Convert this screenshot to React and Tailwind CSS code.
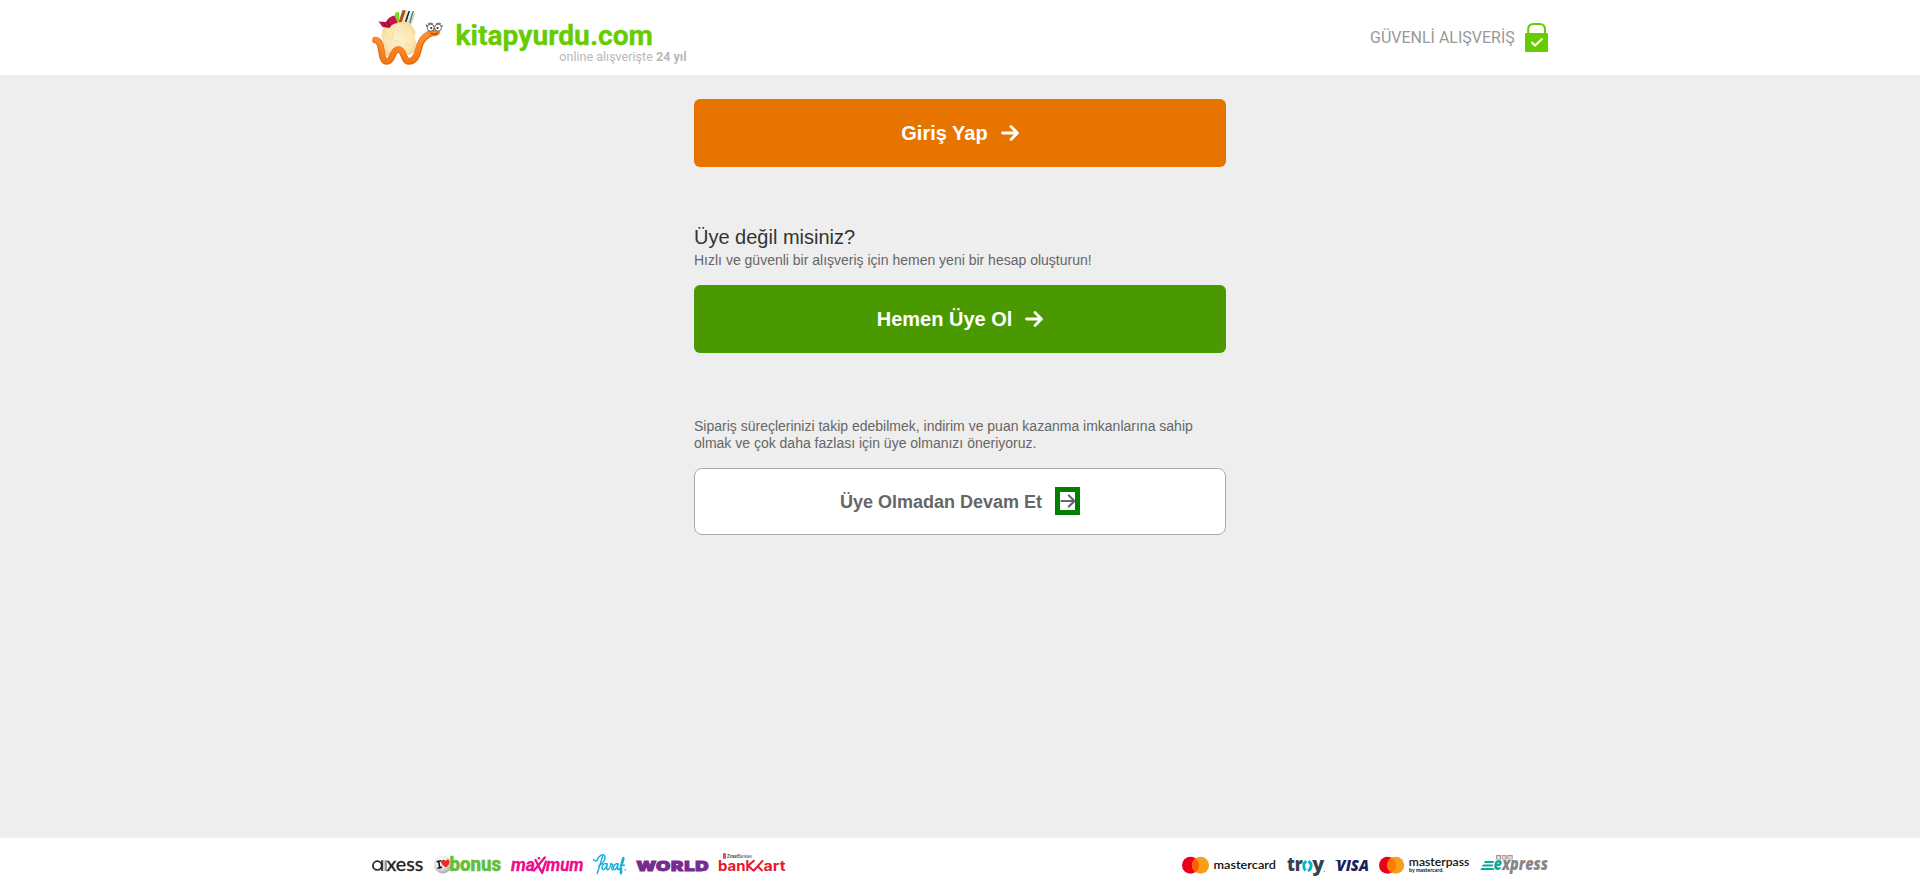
import React from "react";

const FIT = "spacingAndGlyphs";

function ArrowRight({ className }) {
  return (
    <svg className={className} viewBox="0 0 18 16" fill="none" stroke="currentColor" strokeLinecap="round" strokeLinejoin="round">
      <path d="M1.5 8H16M10 1.6L16.4 8L10 14.4" />
    </svg>
  );
}

function Mascot() {
  return (
    <svg className="h-[57px] w-[72px] shrink-0" viewBox="371 9 72 57">
      <defs>
        <linearGradient id="worm" x1="0" y1="0" x2="0" y2="1">
          <stop offset="0" stopColor="#f9933a" />
          <stop offset="1" stopColor="#f37a17" />
        </linearGradient>
        <radialGradient id="sack" cx="0.5" cy="0.5" r="0.6">
          <stop offset="0" stopColor="#fdf0cb" />
          <stop offset="0.65" stopColor="#fbe6b3" />
          <stop offset="1" stopColor="#f3cf8e" />
        </radialGradient>
      </defs>
      <path d="M393.500 22L395.500 12.500L399 12L399.500 24Z" fill="#7ed321" />
      <path d="M398 24L402.500 10L406 10.500L401.500 24Z" fill="#a85a26" />
      <path d="M401.500 24L406 10.500L408.500 11L404 24Z" fill="#f5e6c8" />
      <path d="M404 24L408.500 11L410 11L406 24Z" fill="#2b1a14" />
      <path d="M406 24L410.500 11.500L412.500 12L408.500 24Z" fill="#d8efee" />
      <path d="M408.500 24L412.500 11L414 11.300L410.500 24Z" fill="#3a8f96" />
      <path d="M410.500 24L414 12L415.500 13L412 24Z" fill="#ead9b8" />
      <path
        d="M384 28C388 24 393 25 397 22C402 23 408 20 411 24C412 28 416 29 415.500 34C413 38 418 42 416.500 47C416 51 413 54 409 55L398 51L388 56C384 55 381 50 382.500 45C385 41 380 38 382 33C382 30 383 29 384 28Z"
        fill="url(#sack)"
      />
      <path d="M391 29q3 6 1 10M407 28q-2 4-1 7M400 42l-6-2M406 42l3 4M388 37l3 3" stroke="#efd294" strokeWidth="0.700" fill="none" />
      <path d="M378.500 21.500L386 22C388 18 391 16 394.500 15.500L397.500 23C394 23.500 391 25 389.500 28L382.500 27Z" fill="#c4124a" />
      <path d="M387 21L389.500 27M383 22L386 27" stroke="#7b0a2c" strokeWidth="1" />
      <path
        d="M375.500 40C380 40.500 380.500 46 381.500 51C382.500 58 383.500 61.500 387 61.500C393 61.500 392 49.500 398.500 49.500C404.500 49.500 403 61.800 409.500 61.500C417 61 418 51 420 44.500C422.500 37.500 427 34 434 32.500"
        fill="none"
        stroke="#e56a0c"
        strokeWidth="6.600"
        strokeLinecap="round"
      />
      <path
        d="M375.500 39.500C380 40 381 46 382 51C383 57.500 383.500 60.800 387 60.800C392.500 60.800 392 49 398.500 49C404.500 49 403.500 61.300 409.500 60.800C416.500 60.300 417.500 50.500 419.500 44C422 37 426.500 33.500 434 32"
        fill="none"
        stroke="url(#worm)"
        strokeWidth="5"
        strokeLinecap="round"
      />
      <ellipse cx="434" cy="32" rx="6.200" ry="4.300" fill="#f58427" />
      <circle cx="430.700" cy="27.700" r="3.500" fill="#fff" stroke="#555" strokeWidth="0.900" />
      <circle cx="438" cy="27.700" r="3.500" fill="#fff" stroke="#555" strokeWidth="0.900" />
      <circle cx="431.200" cy="28" r="1.100" fill="#16324a" />
      <circle cx="437.500" cy="28" r="1.100" fill="#16324a" />
      <path d="M427 27l-1-2.500M441.500 27l1-2M428 24q2.500-2 5 0M436 24q2.500-2 5 0" fill="none" stroke="#444" strokeWidth="0.900" />
      <path d="M431 33.500q3.500 2 7-0.500" fill="none" stroke="#6b2b05" strokeWidth="0.900" />
    </svg>
  );
}

function Wordmark() {
  return (
    <svg className="ml-[12px] h-[57px] w-[234px] shrink-0 font-[Roboto,sans-serif]" viewBox="455 9 234 57">
      <text x="455.500" y="44.700" fontSize="28" fontWeight="700" fill="#66cc00" stroke="#66cc00" strokeWidth="0.300" textLength="197.500" lengthAdjust={FIT}>
        kitapyurdu.com
      </text>
      <text x="559.300" y="61.300" fontSize="12.500" fill="#b8b8b8" textLength="93.500" lengthAdjust={FIT}>
        online alışverişte
      </text>
      <text x="656" y="61.300" fontSize="12.500" fontWeight="700" fill="#b8b8b8" textLength="30.500" lengthAdjust={FIT}>
        24 yıl
      </text>
    </svg>
  );
}

function SecureBadge() {
  return (
    <svg className="h-[37px] w-[180px] font-[Roboto,sans-serif]" viewBox="1368 19 180 37">
      <text x="1370" y="43.300" fontSize="16" fill="#999" textLength="144.800" lengthAdjust={FIT}>
        GÜVENLİ ALIŞVERİŞ
      </text>
      <path d="M1528.200 35V29.500Q1528.200 24 1533.500 24H1539.500Q1545 24 1545 29.500V35" fill="none" stroke="#66cc00" strokeWidth="2" />
      <rect x="1525" y="33" width="23" height="19" rx="1" fill="#66cc00" />
      <path d="M1531.500 42L1535 45.500L1542.500 38.500" fill="none" stroke="#fff" strokeWidth="2" />
    </svg>
  );
}

function BankLogos() {
  return (
    <div className="flex items-center">
      <svg className="h-[24px] w-[52px] overflow-visible" viewBox="372 852 52 24">
        <g fill="none" stroke="#222" strokeWidth="1.700">
          <circle cx="377.300" cy="865.600" r="4.400" />
          <path d="M382 860.300V871" />
        </g>
        <path d="M384 860.300V871" stroke="#999" strokeWidth="1" />
        <path d="M386 860.300V871" stroke="#555" strokeWidth="1.200" />
        <text x="386.500" y="870.700" fontFamily="Lato, sans-serif" fontSize="19.500" fill="#222" stroke="#222" strokeWidth="0.350" textLength="36.800" lengthAdjust={FIT}>
          xess
        </text>
      </svg>
      <svg className="ml-[9px] h-[24px] w-[69px] overflow-visible" viewBox="433 852 69 24">
        <defs>
          <radialGradient id="ball" cx="0.4" cy="0.3" r="0.7">
            <stop offset="0" stopColor="#fff" />
            <stop offset="0.6" stopColor="#e4e4e4" />
            <stop offset="1" stopColor="#a8a8a8" />
          </radialGradient>
        </defs>
        <circle cx="442.800" cy="864.500" r="9" fill="url(#ball)" />
        <text x="449.500" y="870.700" fontFamily="Roboto, sans-serif" fontWeight="800" fontSize="19.500" fill="#63bd3b" stroke="#63bd3b" strokeWidth="0.500" textLength="51.500" lengthAdjust={FIT}>
          bonus
        </text>
        <path d="M436.500 861.800L441 860.800M437.500 868.300L442 867.300M438.700 861.500L439.800 867.700" stroke="#111" strokeWidth="1.500" />
        <path d="M446 867.500C442 865 440 862.500 441.500 860.500C443 859 445 860 445.500 861C446 859.500 448.500 858.500 449.200 860.500C450.200 863 448.500 865.500 446 867.500Z" fill="#ea2b2b" />
      </svg>
      <svg className="ml-[8px] h-[24px] w-[74px] overflow-visible" viewBox="510 852 74 24">
        <g fontFamily="Roboto, sans-serif" fontWeight="700" fontStyle="italic" fontSize="18" fill="#ec0c8c" stroke="#ec0c8c" strokeWidth="0.300">
          <text x="511" y="870.600" textLength="24" lengthAdjust={FIT}>ma</text>
          <text x="546" y="870.600" textLength="37.500" lengthAdjust={FIT}>mum</text>
        </g>
        <path d="M534 870.500L544.800 857.500M535.500 860L541.300 871.500M546 861.500L542 873" stroke="#ec0c8c" strokeWidth="2.300" fill="none" strokeLinecap="round" />
        <circle cx="539" cy="858.200" r="1.300" fill="#ec0c8c" />
      </svg>
      <svg className="ml-[8px] h-[24px] w-[35px] overflow-visible" viewBox="592 852 35 24">
        <g fill="none" stroke="#15aedb" strokeWidth="1.400" strokeLinecap="round" strokeLinejoin="round">
          <path d="M593.500 859.500Q594.500 861.500 597 860.500M602.500 856.500Q600 865 597.200 873.500M597 860.500C598 856 603.500 853 604.800 856C606 860 602 864.500 599 865.500" />
          <path d="M607 864C603.500 862.500 601.500 866 602.300 869C603.800 871 606.700 867 607.300 863.800C606.500 867.500 606.500 870 607.700 869.800C609.500 869 610.500 866 610.800 863.500C611.800 864.500 613 864 612.800 865C611.500 867 611.300 870 612.500 869.800" />
          <path d="M618 864C615 862.500 612.800 867 613.700 869.300C615.500 871 617.500 866.500 618.200 863.800C617.200 867.500 617.500 870 618.500 869.500C621.500 868 624.500 859 623.700 857.500C622.500 856.500 620.500 865 620.300 872C620.300 876 622.300 873 621.500 868.500M620.500 865.300H624.500" />
        </g>
        <circle cx="625.200" cy="869.800" r="0.800" fill="#15aedb" />
      </svg>
      <svg className="ml-[9px] h-[24px] w-[73px] overflow-visible" viewBox="636 852 73 24">
        <text x="636.300" y="870.500" fontFamily="Inter, sans-serif" fontWeight="900" fontSize="13.800" letterSpacing="0.500" fill="#752b90" stroke="#752b90" strokeWidth="0.900" textLength="73" lengthAdjust={FIT}>
          WORLD
        </text>
      </svg>
      <svg className="ml-[9px] h-[24px] w-[68px] overflow-visible" viewBox="718 852 68 24">
        <rect x="723" y="853.300" width="3" height="5.500" rx="1" fill="#e3202f" />
        <path d="M723.500 855.300h2M723.500 857h2" stroke="#fff" strokeWidth="0.500" />
        <text x="727" y="857.900" fontFamily="Liberation Sans, sans-serif" fontSize="4.800" fill="#444" textLength="25" lengthAdjust={FIT}>
          <tspan fontWeight="700">Ziraat</tspan>Bankası
        </text>
        <g fontFamily="Inter, sans-serif" fontWeight="700" fontSize="14" fill="#e31b2d">
          <text x="718" y="870.700" textLength="27.500" lengthAdjust={FIT}>ban</text>
          <text x="763.500" y="870.700" textLength="22" lengthAdjust={FIT}>art</text>
        </g>
        <path d="M747.300 860V871M754.500 860.300L748 865.700L754 871M763 860.300L753.500 871M757.500 866L762.500 871" stroke="#e31b2d" strokeWidth="2" fill="none" />
      </svg>
    </div>
  );
}

function CardLogos() {
  return (
    <div className="flex items-center">
      <svg className="h-[24px] w-[96px]" viewBox="1181 852 96 24">
        <circle cx="1190.500" cy="865.300" r="8.500" fill="#eb001b" />
        <circle cx="1200.500" cy="865.300" r="8.500" fill="#f79e1b" />
        <path d="M1195.500 858.430a8.500 8.500 0 0 1 0 13.740a8.500 8.500 0 0 1 0-13.740Z" fill="#ff5f00" />
        <text x="1213.500" y="868.900" fontFamily="Lato, sans-serif" fontWeight="600" fontSize="11.800" fill="#111" textLength="62.500" lengthAdjust={FIT}>mastercard</text>
      </svg>
      <svg className="ml-[9px] h-[24px] w-[40px] overflow-visible" viewBox="1286 852 40 24">
        <g fontFamily="Open Sans, sans-serif" fontWeight="800" fontSize="19" fill="#34434f">
          <text x="1287" y="871" textLength="15.800" lengthAdjust={FIT}>tr</text>
          <text x="1312.200" y="871" textLength="12" lengthAdjust={FIT}>y</text>
        </g>
        <path d="M1306.500 861.300Q1303.700 862.500 1303.700 866Q1303.700 868.500 1305.500 870.500" stroke="#08b5c5" strokeWidth="2.800" fill="none" />
        <path d="M1308.300 861.300Q1311.400 863 1311.200 866Q1310.800 869.500 1307.800 870.700" stroke="#08b5c5" strokeWidth="2.800" fill="none" />
        <circle cx="1324.300" cy="871.300" r="0.700" fill="#999" />
      </svg>
      <svg className="ml-[8px] h-[24px] w-[36px] overflow-visible" viewBox="1334 852 36 24">
        <text x="1336.500" y="870.700" fontFamily="Open Sans, sans-serif" fontWeight="800" fontStyle="italic" fontSize="15" fill="#1a1f5e" textLength="32.500" lengthAdjust={FIT}>VISA</text>
        <path d="M1335.300 860H1340V862.500Q1338 860.900 1335.300 860.400Z" fill="#1a1f5e" />
      </svg>
      <svg className="ml-[8px] h-[24px] w-[92px]" viewBox="1378 852 92 24">
        <circle cx="1387.500" cy="865.300" r="8.500" fill="#eb001b" />
        <circle cx="1395.700" cy="865.300" r="8.500" fill="#f79e1b" />
        <path d="M1391.600 857.850a8.500 8.500 0 0 1 0 14.900a8.500 8.500 0 0 1 0-14.900Z" fill="#ff7a00" />
        <text x="1408.800" y="865.700" fontFamily="Lato, sans-serif" fontWeight="600" fontSize="12" fill="#111" textLength="60.500" lengthAdjust={FIT}>masterpass</text>
        <text x="1409" y="871.700" fontFamily="Lato, sans-serif" fontWeight="700" fontSize="5.600" fill="#111" textLength="34.500" lengthAdjust={FIT}>by mastercard.</text>
      </svg>
      <svg className="-mr-[2px] ml-[10px] h-[26px] w-[70px] overflow-visible" viewBox="1480 851 70 26">
        <rect x="1496" y="855" width="5" height="4.500" fill="#999" />
        <rect x="1501.700" y="855" width="5" height="4.500" fill="#d9924f" />
        <rect x="1507.400" y="855" width="5.300" height="4.500" fill="#999" />
        <text x="1497 1502.700 1508.200" y="858.700" fontFamily="Liberation Sans, sans-serif" fontWeight="700" fontSize="4.200" fill="#fff">BKM</text>
        <path d="M1485 861.100H1494L1493.500 863.100H1484ZM1483 864.500H1493L1492.500 866.500H1481.800ZM1481.500 868H1493.500L1494 870H1480.300Z" fill="#0aa89e" />
        <text x="1493.500" y="870.300" fontFamily="Open Sans, sans-serif" fontWeight="800" fontStyle="italic" fontSize="17" fill="#868686" textLength="54.500" lengthAdjust={FIT}>
          <tspan fill="#0aa89e">e</tspan>xpress
        </text>
      </svg>
    </div>
  );
}

export default function App() {
  return (
    <div className="flex min-h-screen flex-col bg-[#eeeeee] font-['Liberation_Sans',Arial,sans-serif] text-[#666]">
      <header className="h-[75px] bg-white">
        <div className="mx-auto flex h-full w-[1176px] items-center justify-between">
          <a href="#" className="-ml-px flex">
            <Mascot />
            <Wordmark />
          </a>
          <SecureBadge />
        </div>
      </header>

      <main className="mx-auto flex w-[532px] grow flex-col pt-6">
        <button className="flex h-[68px] items-center justify-center gap-[13px] rounded-md bg-[#e87400] text-[20px] font-bold text-white">
          <span>Giriş Yap</span>
          <ArrowRight className="h-4 w-[18px] stroke-[2.8]" />
        </button>

        <h2 className="mt-[58px] text-[20px] leading-[24px] text-[#333]">Üye değil misiniz?</h2>
        <p className="mt-[3px] text-[14px] leading-[17px]">Hızlı ve güvenli bir alışveriş için hemen yeni bir hesap oluşturun!</p>
        <button className="mt-4 flex h-[68px] items-center justify-center gap-[13px] rounded-md bg-[#4b9900] text-[20px] font-bold text-white">
          <span>Hemen Üye Ol</span>
          <ArrowRight className="h-4 w-[18px] stroke-[2.8]" />
        </button>

        <p className="mt-[65px] text-[14px] leading-[17px]">
          Sipariş süreçlerinizi takip edebilmek, indirim ve puan kazanma imkanlarına sahip olmak ve çok daha fazlası için üye olmanızı öneriyoruz.
        </p>
        <button className="mt-4 flex h-[67px] items-center justify-center gap-[13px] rounded-lg border border-[#aaa] bg-white text-[18px] font-bold">
          <span className="pt-px">Üye Olmadan Devam Et</span>
          <span className="mb-px flex h-[28px] w-[25px] items-center justify-center overflow-hidden border-[5px] border-[green]">
            <ArrowRight className="h-[14px] w-[16px] shrink-0 stroke-[2.4]" />
          </span>
        </button>
      </main>

      <footer className="h-[55px] bg-white">
        <div className="mx-auto flex w-[1176px] items-center justify-between pt-[13px]">
          <BankLogos />
          <CardLogos />
        </div>
      </footer>
    </div>
  );
}
